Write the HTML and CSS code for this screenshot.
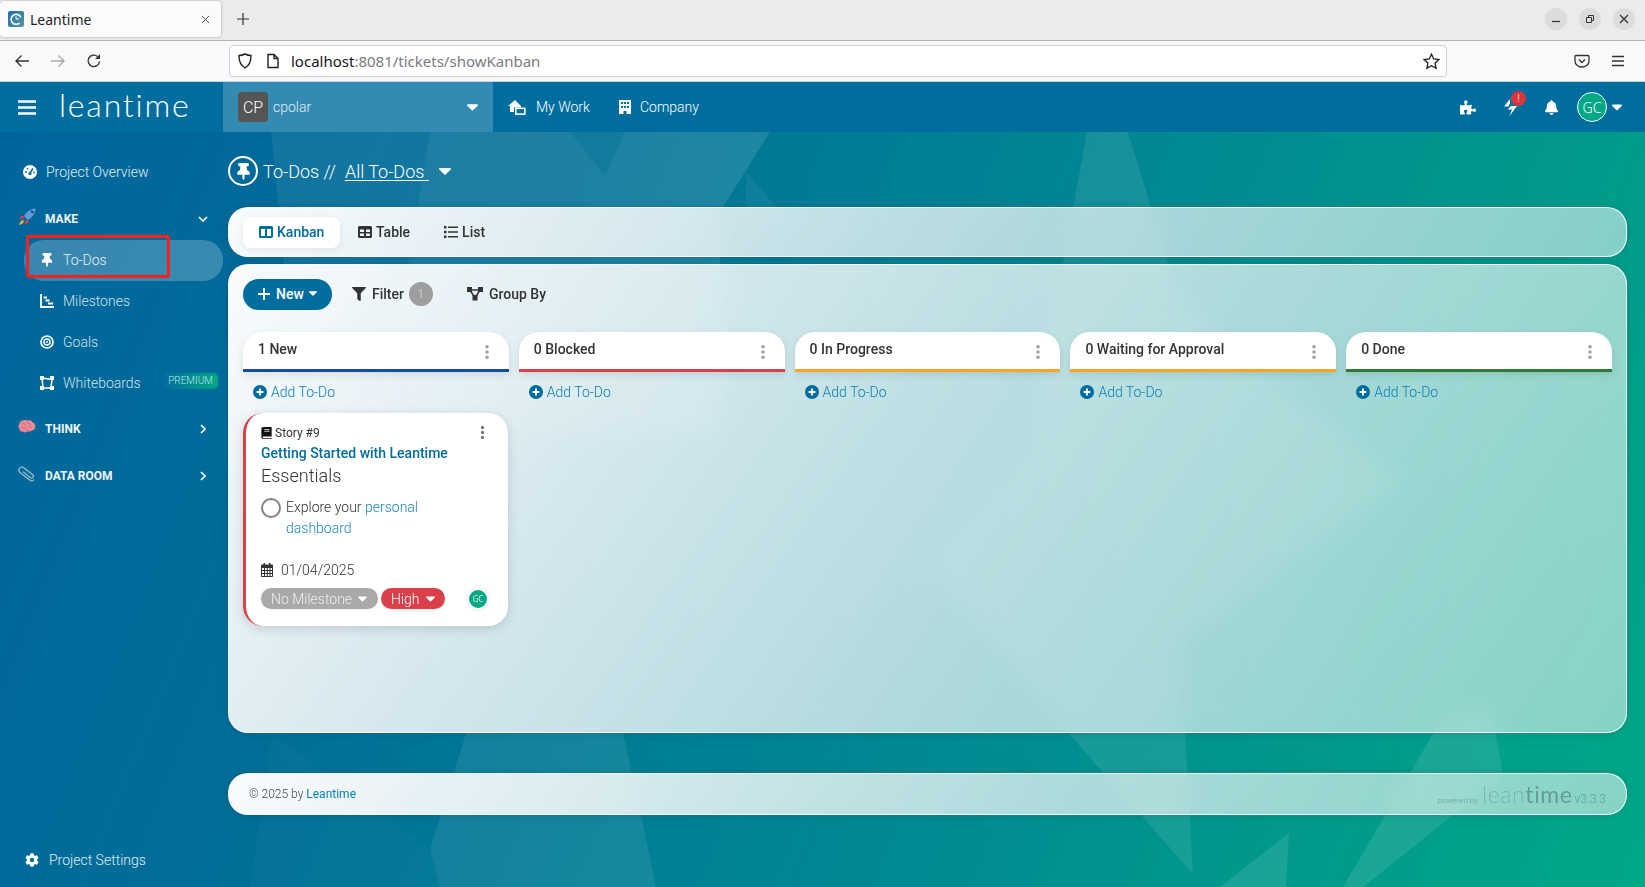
FILE: index.html
```html
<!DOCTYPE html>
<html lang="en">
<head>
<meta charset="utf-8">
<title>Leantime</title>
<link rel="stylesheet" href="styles.css">
</head>
<body>
<svg class="defs" width="0" height="0" aria-hidden="true">
  <defs>
    <symbol id="i-pin" viewBox="0 0 384 512"><path d="M298.028 214.267L285.793 96H328c13.255 0 24-10.745 24-24V24c0-13.255-10.745-24-24-24H56C42.745 0 32 10.745 32 24v48c0 13.255 10.745 24 24 24h42.207L85.972 214.267C37.465 236.82 0 277.261 0 328c0 13.255 10.745 24 24 24h136v104.007c0 1.242.289 2.467.845 3.578l24 48c2.941 5.882 11.364 5.893 14.311 0l24-48a8.008 8.008 0 0 0 .845-3.578V352h136c13.255 0 24-10.745 24-24-.001-51.183-37.983-91.42-85.973-113.733z"/></symbol>
    <symbol id="i-gear" viewBox="0 0 512 512"><path d="M487.4 315.7l-42.6-24.6c4.3-23.2 4.3-47 0-70.2l42.6-24.6c4.9-2.8 7.1-8.6 5.5-14-11.1-35.6-30-67.8-54.7-94.6-3.8-4.1-10-5.1-14.8-2.3L380.8 110c-17.9-15.4-38.5-27.3-60.8-35.1V25.8c0-5.6-3.9-10.5-9.4-11.7-36.7-8.2-74.3-7.8-109.2 0-5.5 1.2-9.4 6.1-9.4 11.7V75c-22.2 7.9-42.8 19.8-60.8 35.1L88.7 85.5c-4.9-2.8-11-1.9-14.8 2.3-24.7 26.7-43.6 58.9-54.7 94.6-1.7 5.4.6 11.2 5.5 14L67.3 221c-4.3 23.2-4.3 47 0 70.2l-42.6 24.6c-4.9 2.8-7.1 8.6-5.5 14 11.1 35.6 30 67.8 54.7 94.6 3.8 4.1 10 5.1 14.8 2.3l42.6-24.6c17.9 15.4 38.5 27.3 60.8 35.1v49.2c0 5.6 3.9 10.5 9.4 11.7 36.7 8.2 74.3 7.8 109.2 0 5.5-1.2 9.4-6.1 9.4-11.7v-49.2c22.2-7.9 42.8-19.8 60.8-35.1l42.6 24.6c4.9 2.8 11 1.9 14.8-2.3 24.7-26.7 43.6-58.9 54.7-94.6 1.5-5.5-.7-11.3-5.6-14.1zM256 336c-44.1 0-80-35.9-80-80s35.9-80 80-80 80 35.9 80 80-35.9 80-80 80z"/></symbol>
    <symbol id="i-bell" viewBox="0 0 448 512"><path d="M224 512c35.32 0 63.97-28.65 63.97-64H160.03c0 35.35 28.65 64 63.97 64zm215.39-149.71c-19.32-20.76-55.47-51.99-55.47-154.29 0-77.7-54.48-139.9-127.94-155.16V32c0-17.67-14.32-32-31.98-32s-31.98 14.33-31.98 32v20.84C118.56 68.1 64.08 130.3 64.08 208c0 102.3-36.15 133.53-55.47 154.29-6 6.45-8.66 14.16-8.61 21.71.11 16.4 12.98 32 32.1 32h383.8c19.12 0 32-15.6 32.1-32 .05-7.55-2.61-15.27-8.61-21.71z"/></symbol>
    <symbol id="i-filter" viewBox="0 0 512 512"><path d="M487.976 0H24.028C2.71 0-8.047 25.866 7.058 40.971L192 225.941V432c0 7.831 3.821 15.17 10.237 19.662l80 55.98C298.02 518.69 320 507.493 320 487.98V225.941l184.947-184.97C520.021 25.896 509.338 0 487.976 0z"/></symbol>
    <symbol id="i-puzzle" viewBox="0 0 576 512"><path d="M519.442 288.651c-41.519 0-59.5 31.593-82.058 31.593C377.409 320.244 432 144 432 144s-196.288 80-196.288-3.297c0-35.827 36.288-46.25 36.288-85.985C272 19.216 243.885 0 210.539 0c-34.654 0-66.366 18.891-66.366 56.346 0 41.364 31.711 59.277 31.711 81.75C175.885 207.719 0 166.758 0 166.758v333.237s178.635 41.047 178.635-28.662c0-22.473-40-40.107-40-81.471 0-37.456 29.25-56.346 63.577-56.346 33.673 0 61.788 19.216 61.788 54.717 0 39.735-36.288 50.158-36.288 85.985 0 60.803 129.675 25.73 181.23 25.73 0 0-34.725-120.101 25.827-120.101 35.962 0 46.423 36.152 86.308 36.152C556.712 416 576 387.99 576 354.443c0-34.199-18.962-65.792-56.558-65.792z"/></symbol>
    <symbol id="i-caret" viewBox="0 0 12 7"><path d="M1 0h10c.9 0 1.3 1 .7 1.6l-5 5c-.4.4-1 .4-1.4 0l-5-5C-.3 1 .1 0 1 0z"/></symbol>
    <symbol id="i-dots" viewBox="0 0 6 18"><circle cx="3" cy="3" r="2"/><circle cx="3" cy="9" r="2"/><circle cx="3" cy="15" r="2"/></symbol>
    <symbol id="i-add" viewBox="0 0 14 14"><circle cx="7" cy="7" r="7" fill="#006d9f"/><path d="M7 3.6v6.8M3.6 7h6.8" stroke="#fff" stroke-width="1.8" fill="none"/></symbol>
  </defs>
</svg>

<div class="tabbar">
  <div class="tab">
    <svg class="favicon" viewBox="0 0 16 16"><defs><linearGradient id="fav" x1="0" y1="0" x2="1" y2="1"><stop offset="0" stop-color="#1a6fb0"/><stop offset="1" stop-color="#5a9a9c"/></linearGradient></defs><rect width="16" height="16" rx="2" fill="url(#fav)"/><path d="M11.5 12A5 5 0 1 1 12.8 6.500" fill="none" stroke="#fff" stroke-width="1.6"/><path d="M8 4.500V8h3" fill="none" stroke="#fff" stroke-width="1"/></svg>
    <span class="tab-title">Leantime</span>
    <svg class="tab-x" viewBox="0 0 10 10"><path d="M1 1l8 8M9 1l-8 8" stroke="#444" stroke-width="1" fill="none"/></svg>
  </div>
  <svg class="tab-plus" viewBox="0 0 14 14"><path d="M7 1v12M1 7h12" stroke="#333" stroke-width="1.2" fill="none"/></svg>
  <div class="win-btns">
    <span class="win-btn"><svg viewBox="0 0 10 10"><path d="M1 7.5h8" stroke="#333" stroke-width="1.2"/></svg></span>
    <span class="win-btn"><svg viewBox="0 0 10 10"><path d="M1.500 3.500h5v5h-5zM3.500 3.500v-2h5v5h-2" stroke="#333" stroke-width="1" fill="none"/></svg></span>
    <span class="win-btn"><svg viewBox="0 0 10 10"><path d="M1 1l8 8M9 1l-8 8" stroke="#333" stroke-width="1.2" fill="none"/></svg></span>
  </div>
</div>

<div class="toolbar">
  <svg class="nav-ic" viewBox="0 0 16 16"><path d="M15 8H2M7.500 2.500L2 8l5.500 5.500" stroke="#333" stroke-width="1.4" fill="none"/></svg>
  <svg class="nav-ic" viewBox="0 0 16 16"><path d="M1 8h13M8.500 2.500L14 8l-5.500 5.500" stroke="#aaa" stroke-width="1.4" fill="none"/></svg>
  <svg class="nav-ic" viewBox="0 0 16 16"><path d="M13.500 8.500A5.700 5.700 0 1 1 11.500 3.500" stroke="#333" stroke-width="1.4" fill="none"/><path d="M14 1v5h-5z" fill="#333"/></svg>
  <div class="urlbar">
    <svg class="url-ic" viewBox="0 0 16 16"><path d="M8 1c2 1 4 1.500 6 1.500 0 6-1.500 10-6 12.500C3.500 12.500 2 8.500 2 2.500 4 2.500 6 2 8 1z" stroke="#222" stroke-width="1.400" fill="none"/></svg>
    <svg class="url-ic doc" viewBox="0 0 16 16"><path d="M3 1.500h6l4 4v9H3zM9 1.500v4h4" stroke="#222" stroke-width="1.400" fill="none"/></svg>
    <span class="url-text"><b>localhost</b>:8081/tickets/showKanban</span>
    <svg class="url-star" viewBox="0 0 16 16"><path d="M8 1.200l2.100 4.400 4.800.6-3.500 3.300.9 4.800L8 12l-4.300 2.300.9-4.800L1.100 6.200l4.800-.6z" stroke="#222" stroke-width="1.300" fill="none"/></svg>
  </div>
  <svg class="nav-ic pocket" viewBox="0 0 16 16"><path d="M2 2.500h12c.6 0 1 .4 1 1V8c0 3.500-3 6-7 6s-7-2.500-7-6V3.500c0-.6.4-1 1-1z" stroke="#333" stroke-width="1.300" fill="none"/><path d="M5 6.500l3 3 3-3" stroke="#333" stroke-width="1.300" fill="none"/></svg>
  <svg class="nav-ic" viewBox="0 0 16 16"><path d="M2 3.500h12M2 8h12M2 12.500h12" stroke="#333" stroke-width="1.300"/></svg>
</div>

<div class="app">
  <svg class="bg-art" viewBox="0 0 1645 755" preserveAspectRatio="none" aria-hidden="true">
    <g fill="#fff">
      <polygon opacity=".07" points="271,0 770,0 720,80 720,300 300,300"/>
      <polygon opacity=".05" points="430,0 570,0 605,44 625,0 770,0 720,80 720,300 380,300"/>
      <polygon opacity=".06" points="746,40 785,85 746,85"/>
      <polygon opacity=".09" points="1087,0 1128,0 1180,170 1400,350 1180,510 1193,742 1069,602 930,430 1030,310"/>
      <polygon opacity=".1" points="1343,755 1363,755 1503,643 1490,570 1440,590"/>
      <polygon opacity=".1" points="1289,701 1220,755 1286,755"/>
      <polygon opacity=".08" points="430,718 466,601 623,601 641,683 656,755 440,755"/>
      <polygon opacity=".02" points="272,601 430,718 440,755 250,755"/>
    </g>
  </svg>

  <header class="topbar">
    <div class="brand">
      <svg class="hamburger" viewBox="0 0 18 15"><path d="M0 1.500h18M0 7.500h18M0 13.500h18" stroke="#fff" stroke-width="2.400"/></svg>
      <span class="logo">leantime</span>
    </div>
    <div class="project-select">
      <span class="project-avatar">CP</span>
      <span class="project-name">cpolar</span>
      <svg class="caret project-caret"><use href="#i-caret"/></svg>
    </div>
    <nav class="topnav">
      <a class="topnav-link">
        <svg class="topnav-ic" viewBox="0 0 18 15"><path fill="#fff" d="M7 0L0 6h2v6h4V7.500h7V6z"/><rect x="7.800" y="8.300" width="9" height="5.800" fill="none" stroke="#fff" stroke-width="1.600"/></svg>
        My Work
      </a>
      <a class="topnav-link">
        <svg class="topnav-ic company" viewBox="0 0 12 14"><path fill="#fff" fill-rule="evenodd" d="M0 0h12v14H7.500v-3h-3v3H0zM2 2v2h2V2zm3 0v2h2V2zm3 0v2h2V2zM2 6v2h2V6zm3 0v2h2V6zm3 0v2h2V6z"/></svg>
        Company
      </a>
    </nav>
    <div class="top-actions">
      <svg class="act-ic"><use href="#i-puzzle"/></svg>
      <span class="bolt-wrap">
        <svg class="act-ic bolt" viewBox="0 0 13 17"><path fill="#fff" d="M6 0L0 7.500h4.500L6 4zM7 7h6L5.500 17 8 10.500H3.500z"/></svg>
        <span class="bolt-badge">!</span>
      </span>
      <svg class="act-ic bell"><use href="#i-bell"/></svg>
      <span class="user-avatar">GC</span>
      <svg class="caret user-caret"><use href="#i-caret"/></svg>
    </div>
  </header>

  <div class="workspace">
    <aside class="sidebar">
      <a class="side-top">
        <svg class="side-top-ic" viewBox="0 0 14 14"><circle cx="7" cy="7" r="7" fill="#fff"/><path d="M7 8L10 3.500" stroke="#0a6b99" stroke-width="1.500"/><circle cx="7" cy="8.500" r="1.600" fill="#0a6b99"/><circle cx="3" cy="7" r=".9" fill="#0a6b99"/><circle cx="4.500" cy="3.800" r=".9" fill="#0a6b99"/><circle cx="11" cy="7.500" r=".9" fill="#0a6b99"/></svg>
        Project Overview
      </a>

      <div class="side-section section-make">
        <svg class="section-ic" viewBox="0 0 18 18"><path fill="#5b9bd8" d="M6 8C9 3 13 .8 17.500.5 17.200 5 15 9 10 12z"/><path fill="#1b3a63" d="M13 2.500a2 2 0 0 1 2.500 2.500 2 2 0 0 1-2.500-2.500z"/><path fill="#d6463f" d="M6.500 7.500L3 8 1.500 11l4-.5zM10.500 11.500L10 15l-3 1.500.5-4z"/><path fill="#f6b73c" d="M4.500 12c-1.500.5-3 3-3.500 5 2-.5 4.500-2 5-3.500z"/></svg>
        <span class="section-label">MAKE</span>
        <svg class="chevron" viewBox="0 0 10 6"><path d="M1 1l4 4 4-4" stroke="#fff" stroke-width="1.600" fill="none"/></svg>
      </div>
      <a class="side-item active">
        <svg class="side-ic"><use href="#i-pin"/></svg>
        To-Dos
        <span class="annotation"></span>
      </a>
      <a class="side-item">
        <svg class="side-ic" viewBox="0 0 14 14"><path d="M1 0v13h13" stroke="#fff" stroke-width="1.800" fill="none"/><path d="M3.500 3.500h3.500M5.500 6.500h4M8 9.500h5" stroke="#fff" stroke-width="1.800"/></svg>
        Milestones
      </a>
      <a class="side-item">
        <svg class="side-ic" viewBox="0 0 14 14"><circle cx="7" cy="7" r="6" stroke="#fff" stroke-width="1.700" fill="none"/><circle cx="7" cy="7" r="3" stroke="#fff" stroke-width="1.500" fill="none"/><circle cx="7" cy="7" r="1" fill="#fff"/></svg>
        Goals
      </a>
      <a class="side-item">
        <svg class="side-ic" viewBox="0 0 14 14"><path d="M2 2l10 1.500L11 12 3 12z" stroke="#fff" stroke-width="1.500" fill="none"/><path fill="#fff" d="M0 0h4v4H0zM10 0h4v4h-4zM0 10h4v4H0zM10 10h4v4h-4z"/></svg>
        Whiteboards
        <span class="premium">PREMIUM</span>
      </a>

      <div class="side-section section-think">
        <svg class="section-ic" viewBox="0 0 18 14"><path fill="#ea8a96" d="M5 .5c2-.8 3.500-.4 4.500 0 2-.6 4.500 0 5 1.700 2 .7 3 2.500 2.700 4.300.6 1.800-.7 3.800-3 3.800-1 1.200-3 1.500-4.500 1-1 1.300-3 1.500-4.200.5-2.200.2-4-1-4.300-3C.3 7.800 0 5.500 1.300 4 1.600 2 3 .7 5 .5z"/><path d="M4 4c1.500-1 3 0 4 1M9 3c1.500 0 3 .5 4 2M3 8c2-1 3.500 0 5 .5M10 7c1.500-.5 3 0 4 1M7 10.500c1-1 2.500-1 3.500 0" stroke="#c9606e" stroke-width=".8" fill="none"/></svg>
        <span class="section-label">THINK</span>
        <svg class="chevron right" viewBox="0 0 6 10"><path d="M1 1l4 4-4 4" stroke="#fff" stroke-width="1.600" fill="none"/></svg>
      </div>
      <div class="side-section section-data">
        <svg class="section-ic" viewBox="0 0 18 16"><path d="M16 13.500c-1 1.500-2.800 1.800-4 .8L2 6.500C.6 5.300.6 3.600 1.500 2.400 2.500 1 4.400.7 5.700 1.700l9 7c.8.700 1 1.800.4 2.600s-1.700 1-2.500.4L5 5.800" stroke="#9db9c9" stroke-width="1.300" fill="none"/></svg>
        <span class="section-label">DATA ROOM</span>
        <svg class="chevron right" viewBox="0 0 6 10"><path d="M1 1l4 4-4 4" stroke="#fff" stroke-width="1.600" fill="none"/></svg>
      </div>

      <a class="side-settings">
        <svg class="settings-ic"><use href="#i-gear"/></svg>
        Project Settings
      </a>
    </aside>

    <main class="main">
      <div class="page-title">
        <span class="title-pin"><svg><use href="#i-pin"/></svg></span>
        <span class="title-text">To-Dos //</span>
        <a class="title-link">All To-Dos&nbsp;</a>
        <svg class="caret title-caret"><use href="#i-caret"/></svg>
      </div>

      <div class="panel tabs-panel">
        <a class="view-tab current">
          <svg class="view-ic" viewBox="0 0 14 12"><path fill-rule="evenodd" d="M1.500 0h11c.8 0 1.500.7 1.500 1.500v9c0 .8-.7 1.500-1.500 1.500h-11C.7 12 0 11.300 0 10.500v-9C0 .7.700 0 1.500 0zM2 3v7h4V3zm6 0v7h4V3z"/></svg>
          Kanban
        </a>
        <a class="view-tab">
          <svg class="view-ic" viewBox="0 0 14 12"><path fill-rule="evenodd" d="M1.500 0h11c.8 0 1.500.7 1.500 1.500v9c0 .8-.7 1.500-1.500 1.500h-11C.7 12 0 11.300 0 10.500v-9C0 .7.700 0 1.500 0zM2 3.500v2.500h4V3.500zm6 0v2.500h4V3.500zM2 7.500V10h4V7.500zm6 0V10h4V7.500z"/></svg>
          Table
        </a>
        <a class="view-tab">
          <svg class="view-ic" viewBox="0 0 14 12"><path d="M0 0h2.500v2.500H0zM0 4.700h2.500v2.500H0zM0 9.500h2.500V12H0zM4 .5h10v1.500H4zM4 5.200h10v1.500H4zM4 10h10v1.500H4z"/></svg>
          List
        </a>
      </div>

      <section class="panel board-panel">
        <div class="board-tools">
          <button class="btn-new">
            <svg class="btn-plus" viewBox="0 0 12 12"><path d="M6 0v12M0 6h12" stroke="#fff" stroke-width="1.800"/></svg>
            New
            <svg class="new-caret"><use href="#i-caret"/></svg>
          </button>
          <a class="tool filter-tool">
            <svg class="tool-ic"><use href="#i-filter"/></svg>
            Filter
            <span class="filter-count">1</span>
          </a>
          <a class="tool group-tool">
            <svg class="tool-ic group-ic" viewBox="0 0 16 14"><path d="M3 3h10M3 3l5 8M13 3l-5 8" stroke="#333" stroke-width="1.500" fill="none"/><path d="M0 0h5v5H0zM11 0h5v5h-5zM5.500 8h5v5.500h-5z"/></svg>
            Group&nbsp;By
          </a>
        </div>

        <div class="columns">
          <div class="column">
            <div class="col-head blue"><span>1 New</span><svg class="col-dots"><use href="#i-dots"/></svg></div>
            <a class="add-todo"><svg><use href="#i-add"/></svg>Add To-Do</a>
            <article class="card">
              <div class="card-top">
                <svg class="book-ic" viewBox="0 0 12 14"><path d="M2 0h10v11H2.500a1 1 0 0 0 0 2H12v1H2a2 2 0 0 1-2-2V2a2 2 0 0 1 2-2z"/><path d="M3.500 3h6M3.500 5h6" stroke="#fff" stroke-width=".9"/></svg>
                <span class="story">Story #9</span>
                <svg class="card-dots"><use href="#i-dots"/></svg>
              </div>
              <a class="card-title">Getting Started with Leantime</a>
              <h4 class="card-sub">Essentials</h4>
              <div class="task">
                <span class="task-circle"></span>
                <div class="task-text">
                  <div>Explore your <a>personal</a></div>
                  <a class="task-link">dashboard</a>
                </div>
              </div>
              <div class="card-date">
                <svg class="cal-ic" viewBox="0 0 12 14"><path fill-rule="evenodd" d="M2.500 0h1.500v1.500h4V0h1.500v1.500H11c.6 0 1 .4 1 1V13c0 .6-.4 1-1 1H1c-.6 0-1-.4-1-1V2.500c0-.6.4-1 1-1h1.500zM1 5v2h2V5zm3 0v2h1.800V5zm2.800 0v2H8.500V5zM9.500 5v2H11V5zM1 8v2h2V8zm3 0v2h1.800V8zm2.800 0v2H8.500V8zM9.500 8v2H11V8zM1 11v2h2v-2zm3 0v2h1.800v-2zm2.800 0v2H8.500v-2zm2.700 0v2H11v-2z"/></svg>
                01/04/2025
              </div>
              <div class="card-foot">
                <span class="pill gray">No Milestone<svg class="pill-caret"><use href="#i-caret"/></svg></span>
                <span class="pill red">High<svg class="pill-caret"><use href="#i-caret"/></svg></span>
                <span class="card-avatar">GC</span>
              </div>
            </article>
          </div>
          <div class="column">
            <div class="col-head crimson"><span>0 Blocked</span><svg class="col-dots"><use href="#i-dots"/></svg></div>
            <a class="add-todo"><svg><use href="#i-add"/></svg>Add To-Do</a>
          </div>
          <div class="column">
            <div class="col-head orange"><span>0 In Progress</span><svg class="col-dots"><use href="#i-dots"/></svg></div>
            <a class="add-todo"><svg><use href="#i-add"/></svg>Add To-Do</a>
          </div>
          <div class="column">
            <div class="col-head orange"><span>0 Waiting for Approval</span><svg class="col-dots"><use href="#i-dots"/></svg></div>
            <a class="add-todo"><svg><use href="#i-add"/></svg>Add To-Do</a>
          </div>
          <div class="column">
            <div class="col-head green"><span>0 Done</span><svg class="col-dots"><use href="#i-dots"/></svg></div>
            <a class="add-todo"><svg><use href="#i-add"/></svg>Add To-Do</a>
          </div>
        </div>
      </section>

      <footer class="panel foot-panel">
        <span class="copyright">© 2025 by <a>Leantime</a></span>
        <span class="powered">
          <span class="powered-by">powered by</span>
          <span class="powered-logo">lean<b>time</b></span>
          <span class="version">v3.3.3</span>
        </span>
      </footer>
    </main>
  </div>
</div>
</body>
</html>
```
FILE: styles.css
```css
* { box-sizing: border-box; }
html, body { margin: 0; height: 100%; }
body {
  width: 1645px;
  height: 887px;
  overflow: hidden;
  display: flex;
  flex-direction: column;
  font-family: Roboto, "Liberation Sans", sans-serif;
  font-size: 14px;
  background: #00689b;
}
.defs { position: absolute; }
a { color: inherit; text-decoration: none; }
svg { display: block; fill: currentColor; flex: none; }

/* browser chrome */
.tabbar {
  height: 41px;
  flex: none;
  display: flex;
  align-items: flex-start;
  background: #ebebeb;
  border-bottom: 1px solid #b4b4b4;
  font-family: "Noto Sans", sans-serif;
}
.tab {
  width: 221px;
  height: 36px;
  margin-top: 1px;
  padding: 0 10px 0 8px;
  display: flex;
  align-items: center;
  background: #fbfbfb;
  border-radius: 4px;
  box-shadow: 0 0 3px rgba(0,0,0,.3);
}
.favicon { width: 16px; height: 16px; }
.tab-title { margin-left: 6px; font-size: 14px; color: #222; flex: 1; }
.tab-x { width: 9px; height: 9px; margin-right: 1px; }
.tab-plus { width: 14px; height: 14px; margin: 12px 0 0 15px; }
.win-btns { margin: 8px 10px 0 auto; display: flex; gap: 12px; }
.win-btn { width: 22px; height: 22px; border-radius: 50%; background: #dcdcdc; display: flex; align-items: center; justify-content: center; }
.win-btn svg { width: 10px; height: 10px; }

.toolbar {
  height: 41px;
  flex: none;
  display: flex;
  align-items: center;
  padding-left: 14px;
  gap: 20px;
  background: #f9f9fb;
  border-bottom: 1px solid #cfcfd8;
}
.nav-ic { width: 16px; height: 16px; }
.urlbar {
  width: 1218px;
  height: 32px;
  margin-left: 107px;
  padding: 0 6px 0 7px;
  display: flex;
  align-items: center;
  background: #fff;
  border: 1px solid #cfcfd8;
  border-radius: 4px;
}
.url-ic { width: 16px; height: 16px; }
.url-ic.doc { margin-left: 12px; }
.url-text { margin-left: 10px; font-family: "Noto Sans", sans-serif; font-size: 15px; color: #7a7a80; flex: 1; }
.url-text b { font-weight: 400; color: #15141a; }
.url-star { width: 17px; height: 17px; }
.pocket { margin-left: 107px; }

/* app */
.app {
  position: relative;
  flex: 1;
  display: flex;
  flex-direction: column;
  min-height: 0;
  background: linear-gradient(112deg, #00649c 0%, #006f98 28%, #008a92 62%, #00a886 100%);
}
.bg-art { position: absolute; left: 0; top: 50px; width: 1645px; height: 755px; }

.topbar {
  position: relative;
  height: 50px;
  flex: none;
  display: flex;
  align-items: center;
  background: #006d9f;
  color: #fff;
}
.brand { width: 223px; display: flex; align-items: center; padding-left: 18px; }
.hamburger { width: 18px; height: 15px; }
.logo {
  margin: -5px 0 0 23px;
  font-family: Lato, Roboto, sans-serif;
  font-weight: 300;
  font-size: 32px;
  letter-spacing: 1.8px;
  line-height: 40px;
  color: #fff;
}
.project-select {
  width: 270px;
  height: 50px;
  padding: 0 15px;
  display: flex;
  align-items: center;
  background: rgba(255,255,255,.2);
}
.project-avatar {
  width: 30px;
  height: 30px;
  border-radius: 4px;
  background: #555;
  color: #fff;
  font-size: 16px;
  font-weight: 300;
  display: flex;
  align-items: center;
  justify-content: center;
}
.project-name { margin-left: 5px; font-weight: 300; color: #e6eef3; flex: 1; }
.caret { width: 11px; height: 7px; fill: #fff; }
.topnav { display: flex; margin-left: 15px; gap: 29px; }
.topnav-link { display: flex; align-items: center; font-weight: 300; }
.topnav-ic { width: 18px; height: 15px; margin-right: 10px; }
.topnav-ic.company { width: 12px; height: 14px; margin-right: 9px; }
.top-actions { margin-left: auto; padding-right: 23px; display: flex; align-items: center; }
.act-ic { width: 16px; height: 15px; fill: #fff; }
.bolt-wrap { position: relative; margin-left: 28px; }
.bolt { width: 13px; height: 17px; }
.bolt-badge {
  position: absolute;
  left: 7px;
  top: -8px;
  width: 15px;
  height: 15px;
  border-radius: 50%;
  background: #d9363e;
  color: #f6c5c8;
  font-size: 10px;
  line-height: 15px;
  text-align: center;
}
.bell { width: 13px; height: 15px; margin-left: 28px; }
.user-avatar {
  width: 30px;
  height: 30px;
  margin-left: 19px;
  border-radius: 50%;
  border: 1px solid #fff;
  background: #00a886;
  color: #fff;
  font-family: "Noto Sans", sans-serif;
  font-size: 14px;
  font-weight: 300;
  display: flex;
  align-items: center;
  justify-content: center;
}
.user-caret { margin-left: 5px; width: 10px; }

.workspace { position: relative; flex: 1; display: flex; min-height: 0; }

/* sidebar */
.sidebar {
  width: 223px;
  flex: none;
  padding: 20px 0 7px;
  display: flex;
  flex-direction: column;
  color: #e1edf3;
  font-weight: 300;
}
.side-top, .side-settings { height: 40px; display: flex; align-items: center; }
.side-top { padding-left: 23px; }
.side-top-ic { width: 14px; height: 14px; margin-right: 9px; }
.side-section { height: 40px; display: flex; align-items: center; padding: 0 15px 0 18px; color: #fff; }
.section-make { margin: 7px 0 1px; }
.section-think { margin-top: 5px; }
.section-data { margin-top: 7px; }
.section-ic { width: 18px; height: 18px; margin-top: -5px; }
.section-label { margin-left: 9px; font-size: 12px; font-weight: 700; flex: 1; color: #eef5f8; }
.chevron { width: 10px; height: 6px; }
.chevron.right { width: 6px; height: 10px; margin-right: 2px; }
.side-item {
  position: relative;
  height: 41px;
  margin-left: 24px;
  padding: 0 0 2px 16px;
  display: flex;
  align-items: center;
  border-radius: 20px;
  color: #cfe2ec;
}
.side-item.active { background: rgba(255,255,255,.22); color: #e6f0f5; }
.side-ic { width: 14px; height: 14px; margin-right: 9px; fill: #fff; }
.annotation {
  position: absolute;
  left: 2px;
  top: -5px;
  width: 144px;
  height: 43px;
  border: 3px solid #f5211f;
  border-radius: 3px;
}
.premium {
  position: absolute;
  left: 139px;
  top: 10px;
  width: 55px;
  height: 16px;
  border-radius: 5px;
  background: linear-gradient(90deg, #006d9f, #00a886);
  color: #bfe6e4;
  font-size: 10px;
  line-height: 16px;
  text-align: center;
}
.side-settings { margin-top: auto; padding-left: 25px; }
.settings-ic { width: 14px; height: 14px; margin-right: 10px; fill: #fff; }

/* main */
.main { flex: 1; min-width: 0; padding: 24px 18px 0 5px; display: flex; flex-direction: column; }
.page-title { height: 30px; margin-bottom: 21px; display: flex; align-items: center; color: #fff; font-size: 18px; font-weight: 300; }
.title-pin {
  width: 30px;
  height: 30px;
  border: 2px solid #fff;
  border-radius: 50%;
  display: flex;
  align-items: center;
  justify-content: center;
}
.title-pin svg { width: 13px; height: 17px; fill: #fff; }
.title-text { margin-left: 5px; }
.title-link { margin-left: 9px; text-decoration: underline; text-underline-offset: 2px; text-decoration-thickness: 1px; }
.title-caret { margin-left: 10px; width: 12px; height: 7px; }

.panel {
  background: linear-gradient(125deg, rgba(255,255,255,.98) 0%, rgba(255,255,255,.85) 25%, rgba(255,255,255,.68) 60%, rgba(255,255,255,.52) 100%);
  border: 1px solid rgba(255,255,255,.9);
  border-radius: 20px;
  box-shadow: 0 0 8px rgba(0,0,0,.12);
  backdrop-filter: blur(12px);
}
.tabs-panel { height: 50px; padding: 9px 14px; display: flex; flex: none; color: #333; }
.view-tab {
  height: 31px;
  padding: 0 16px 2px;
  display: flex;
  align-items: center;
  gap: 4px;
  border-radius: 8px;
  font-weight: 500;
  color: #333;
}
.view-tab + .view-tab { padding: 0 17px 2px; }
.view-tab.current { background: #fff; color: #006d9f; box-shadow: 0 2px 8px rgba(0,0,0,.08); width: 97px; margin-right: 1px; }
.view-ic { width: 14px; height: 12px; }

.board-panel { height: 469px; margin-top: 7px; padding: 14px; flex: none; }
.board-tools { display: flex; align-items: center; height: 31px; }
.btn-new {
  width: 89px;
  height: 31px;
  padding: 0 0 2px 15px;
  display: flex;
  align-items: center;
  border: 0;
  border-radius: 16px;
  background: #006d9f;
  color: #fff;
  font: 500 14px Roboto, sans-serif;
}
.btn-plus { width: 12px; height: 12px; margin-right: 6px; }
.new-caret { width: 8px; height: 5px; margin-left: 5px; fill: #fff; }
.tool { display: flex; align-items: center; font-weight: 500; color: #333; margin-top: -2px; }
.tool-ic { width: 14px; height: 14px; }
.filter-tool { margin-left: 20px; }
.filter-tool .tool-ic { margin-right: 6px; }
.filter-count {
  width: 24px;
  height: 24px;
  margin-left: 5px;
  border-radius: 50%;
  background: #9e9e9e;
  color: #c8c8c8;
  font-size: 12px;
  font-weight: 400;
  line-height: 24px;
  text-align: center;
}
.group-tool { margin-left: 34px; }
.group-ic { width: 16px; height: 14px; margin-right: 6px; }

.columns { display: grid; grid-template-columns: repeat(5, 1fr); gap: 10px; margin-top: 22px; }
.col-head {
  height: 40px;
  padding: 0 15px;
  display: flex;
  align-items: center;
  justify-content: space-between;
  background: #fff;
  border-bottom: 3px solid;
  border-radius: 20px 20px 0 0;
  box-shadow: 0 3px 8px rgba(0,0,0,.1);
  font-weight: 500;
  color: #333;
}
.col-head span { margin-top: -4px; }
.col-head.blue { border-color: #124da0; }
.col-head.crimson { border-color: #d8404a; }
.col-head.orange { border-color: #f5a623; }
.col-head.green { border-color: #2e7d32; }
.col-dots { width: 6px; height: 16px; margin: 2px 4px 0 0; fill: #a0a0a0; }
.add-todo { margin: 10px 0 0 10px; height: 20px; display: flex; align-items: center; font-weight: 300; color: #0a7fb4; }
.add-todo svg { width: 14px; height: 14px; margin-right: 4px; }

.card {
  width: 265px;
  margin-top: 11px;
  padding: 12px 15px 17px;
  background: #fff;
  border-left: 3px solid #d9404a;
  border-radius: 20px;
  box-shadow: 0 3px 12px rgba(0,0,0,.14);
  color: #333;
}
.card-top { height: 16px; display: flex; align-items: center; }
.book-ic { width: 11px; height: 12px; color: #111; }
.story { margin-left: 3px; font-size: 12px; color: #333; flex: 1; }
.card-dots { width: 5px; height: 15px; margin: -2px 8px 0 0; fill: #777; }
.card-title { display: block; margin-top: 2px; line-height: 20px; font-weight: 500; color: #006d9f; }
.card-sub { margin: 2px 0 0; font-size: 18px; font-weight: 300; line-height: 22px; color: #333; }
.task { display: flex; margin-top: 10px; }
.task-circle { width: 20px; height: 20px; margin-top: 1px; flex: none; border: 2px solid #808080; border-radius: 50%; }
.task-text { margin: 0 0 0 5px; width: 160px; line-height: 21px; font-weight: 300; color: #333; }
.task-text a { color: #1b87bc; }
.task-link { display: block; }
.card-date { margin-top: 21px; height: 20px; display: flex; align-items: center; font-weight: 300; color: #333; }
.cal-ic { width: 12px; height: 14px; margin-right: 8px; }
.card-foot { margin-top: 8px; height: 21px; display: flex; align-items: center; }
.pill {
  height: 21px;
  padding: 0 10px;
  display: flex;
  align-items: center;
  border-radius: 11px;
  font-weight: 300;
  color: #fff;
  box-shadow: 0 1px 3px rgba(0,0,0,.08);
}
.pill.gray { background: #a9a9a9; width: 117px; color: #eee; }
.pill.red { background: #d9404a; width: 64px; margin-left: 3px; }
.pill-caret { width: 9px; height: 6px; margin-left: 6px; fill: #fff; }
.card-avatar {
  width: 22px;
  height: 22px;
  margin-left: 22px;
  border: 2px solid #fff;
  border-radius: 50%;
  background: #00a886;
  color: #d8f3ec;
  font-family: "Noto Sans", sans-serif;
  font-size: 8px;
  line-height: 18px;
  text-align: center;
  box-shadow: 0 0 2px rgba(0,0,0,.2);
}

.foot-panel {
  height: 42px;
  margin-top: 40px;
  padding: 0 20px;
  display: flex;
  align-items: center;
  justify-content: space-between;
  flex: none;
  font-size: 12px;
  font-weight: 300;
  color: #444;
}
.foot-panel a { color: #0a7fb4; font-weight: 400; }
.powered { display: flex; align-items: baseline; color: #6b9b99; }
.powered-by { font-size: 8px; margin-right: 4px; }
.powered-logo { font-family: Lato, Roboto, sans-serif; font-size: 23px; font-weight: 300; letter-spacing: .6px; line-height: 24px; color: #7cb4b0; }
.powered-logo b { font-weight: 400; color: #6b9b99; }
.version { margin-left: 2px; font-size: 12px; }
```
